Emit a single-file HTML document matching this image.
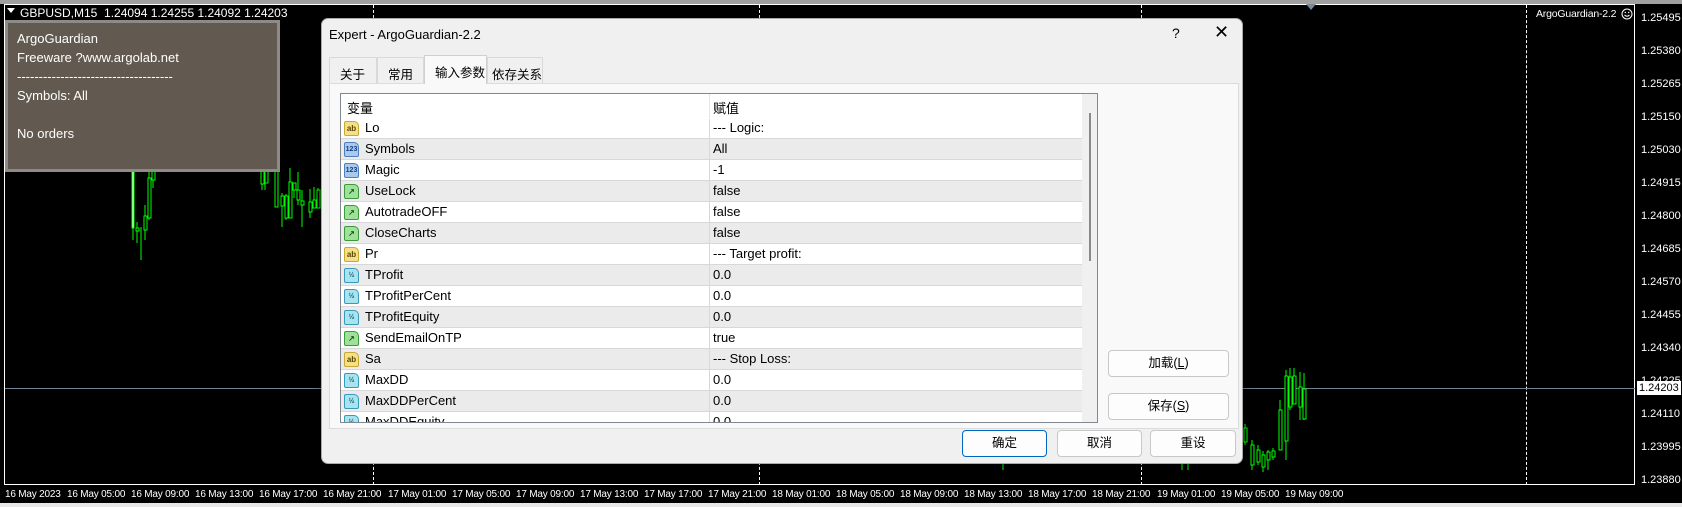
<!DOCTYPE html>
<html><head><meta charset="utf-8"><style>
*{margin:0;padding:0;box-sizing:border-box}
body{width:1682px;height:507px;background:#000;position:relative;overflow:hidden;font-family:"Liberation Sans","Noto Sans CJK SC",sans-serif}
.a{position:absolute}
.px{font-size:11px;color:#fff;left:1641px;font-family:"Liberation Sans",sans-serif}
.tl{font-size:10px;letter-spacing:-0.2px;color:#fff;top:489px;font-family:"Liberation Sans",sans-serif;white-space:nowrap}
.dlg{left:321px;top:18px;width:922px;height:446px;background:#f0f0f0;border:1px solid #aaa;border-radius:7px;box-shadow:0 0 8px rgba(0,0,0,.4)}
.tab{top:38px;height:26px;border:1px solid #d9d9d9;border-bottom:none;background:#f0f0f0;font-size:12.5px;padding:6px 0 0 10px;color:#000}
.row{position:absolute;left:0;width:741px;height:21px;border-bottom:1px solid #d8d8d8;font-size:13px;color:#000}
.row span.n{position:absolute;left:24px;top:2px}
.row span.v{position:absolute;left:372px;top:2px}
.ic{position:absolute;left:3px;top:3px;width:15px;height:15px;border:1px solid;border-radius:2px 5px 2px 2px;font-size:8px;font-weight:bold;text-align:center;line-height:13px;font-family:"Liberation Sans",sans-serif;font-style:normal}
.ab{background:#f5e08a;border-color:#c8a830;color:#5a4400}
.n3{background:#a9c9ee;border-color:#4c7fc0;color:#13407a;font-size:7px}
.bl{background:#9fe09a;border-color:#3a9a3a;color:#106010}
.hf{background:#a8e4f0;border-color:#3a98b8;color:#10607a;font-size:7px}
.btn{position:absolute;background:#fdfdfd;border:1px solid #c8c8c8;border-radius:4px;font-size:12.5px;text-align:center;line-height:25px;color:#000}
</style></head><body>
<div class="a" style="left:0;top:0;width:1682px;height:4px;background:#a0a0a0"></div>
<div class="a" style="left:0;top:503px;width:1682px;height:4px;background:#e8e8e8"></div>
<div class="a" style="left:4px;top:4px;width:1631px;height:481px;border:1px solid #fff"></div>
<div class="a" style="left:373px;top:5px;height:480px;border-left:1px dashed #fff"></div>
<div class="a" style="left:759px;top:5px;height:480px;border-left:1px dashed #fff"></div>
<div class="a" style="left:1141px;top:5px;height:480px;border-left:1px dashed #fff"></div>
<div class="a" style="left:1526px;top:5px;height:480px;border-left:1px dashed #fff"></div>
<div class="a" style="left:5px;top:388px;width:1630px;height:1px;background:#6f8296"></div>
<div class="a" style="left:1306px;top:4px;width:0;height:0;border-left:5px solid transparent;border-right:5px solid transparent;border-top:6px solid #7a8a9a"></div>
<svg class="a" style="left:0;top:0" width="1682" height="507">
<g stroke="#00ff00" stroke-width="1" fill="#000">
<line x1="133" y1="150" x2="133" y2="240"/><rect x="132" y="150" width="2" height="78" fill="#fff" stroke="#00ff00"/>
<line x1="137" y1="222" x2="137" y2="243"/><rect x="136" y="228" width="3" height="3"/>
<line x1="141" y1="227" x2="141" y2="260"/>
<line x1="145" y1="205" x2="145" y2="240"/><rect x="144" y="216" width="3" height="14"/>
<line x1="149" y1="170" x2="149" y2="220"/><rect x="148" y="178" width="3" height="40"/>
<line x1="153" y1="165" x2="153" y2="188"/><rect x="152" y="170" width="3" height="10"/>
<line x1="262" y1="170" x2="262" y2="190"/><rect x="261" y="170" width="3" height="14"/>
<line x1="265" y1="170" x2="265" y2="190"/><rect x="265" y="170" width="3" height="13"/>
<line x1="276" y1="170" x2="276" y2="207"/><rect x="275" y="170" width="3" height="37"/>
<line x1="282" y1="193" x2="282" y2="227"/><rect x="281" y="196" width="3" height="10"/>
<line x1="286" y1="194" x2="286" y2="220"/><rect x="285" y="196" width="3" height="22"/>
<line x1="290" y1="168" x2="290" y2="218"/><rect x="289" y="182" width="3" height="36"/>
<line x1="294" y1="184" x2="294" y2="198"/><rect x="293" y="183" width="3" height="7"/>
<line x1="298" y1="172" x2="298" y2="205"/><rect x="297" y="190" width="3" height="10"/>
<line x1="302" y1="190" x2="302" y2="227"/><rect x="301" y="201" width="3" height="4"/>
<line x1="310" y1="189" x2="310" y2="218"/><rect x="309" y="202" width="3" height="10"/>
<line x1="314" y1="187" x2="314" y2="207"/><rect x="313" y="200" width="3" height="8"/>
<line x1="318" y1="188" x2="318" y2="208"/><rect x="317" y="190" width="3" height="18"/>
<line x1="1245" y1="424" x2="1245" y2="445"/><rect x="1244" y="428" width="3" height="14"/>
<line x1="1252" y1="440" x2="1252" y2="470"/><rect x="1251" y="445" width="3" height="20"/>
<line x1="1258" y1="445" x2="1258" y2="465"/><rect x="1257" y="450" width="3" height="12"/>
<line x1="1263" y1="451" x2="1263" y2="472"/><rect x="1262" y="455" width="3" height="12"/>
<line x1="1268" y1="450" x2="1268" y2="470"/><rect x="1267" y="452" width="3" height="8"/>
<line x1="1273" y1="448" x2="1273" y2="460"/><rect x="1272" y="451" width="3" height="6"/>
<line x1="1280" y1="400" x2="1280" y2="450"/><rect x="1279" y="410" width="3" height="40"/>
<line x1="1286" y1="370" x2="1286" y2="460"/><rect x="1285" y="376" width="3" height="65"/>
<line x1="1290" y1="368" x2="1290" y2="410"/><rect x="1289" y="377" width="3" height="30"/>
<line x1="1294" y1="368" x2="1294" y2="404"/><rect x="1293" y="376" width="3" height="28"/>
<line x1="1300" y1="372" x2="1300" y2="420"/><rect x="1299" y="387" width="3" height="20"/>
<line x1="1304" y1="373" x2="1304" y2="420"/><rect x="1303" y="389" width="3" height="30"/>
<line x1="1003" y1="425" x2="1003" y2="470"/><line x1="1024" y1="430" x2="1024" y2="460"/>
<line x1="1182" y1="425" x2="1182" y2="470"/><line x1="1188" y1="435" x2="1188" y2="470"/>
</g>
<circle cx="1627" cy="14" r="5" fill="none" stroke="#fff" stroke-width="1"/>
<path d="M1624.5 15 Q1627 17.5 1629.5 15" fill="none" stroke="#fff"/>
<circle cx="1625.3" cy="12.5" r=".7" fill="#fff"/><circle cx="1628.7" cy="12.5" r=".7" fill="#fff"/>
</svg>
<div class="a" style="left:7px;top:8px;width:0;height:0;border-left:4px solid transparent;border-right:4px solid transparent;border-top:5px solid #fff"></div>
<div class="a" style="left:20px;top:6px;font-size:12px;color:#fff">GBPUSD,M15&nbsp; 1.24094 1.24255 1.24092 1.24203</div>
<div class="a" style="left:1536px;top:8px;font-size:10.5px;color:#fff;letter-spacing:-0.2px">ArgoGuardian-2.2</div>
<div class="a" style="left:5px;top:20px;width:275px;height:152px;background:#625a50;border:3px solid #8e8a87;color:#fff;font-size:13px;line-height:19px;padding:6px 0 0 9px">ArgoGuardian<br>Freeware ?www.argolab.net<br>------------------------------------<br>Symbols: All<br><br>No orders</div>
<div class="a px" style="top:12px">1.25495</div><div class="a px" style="top:45px">1.25380</div><div class="a px" style="top:78px">1.25265</div><div class="a px" style="top:111px">1.25150</div><div class="a px" style="top:144px">1.25030</div><div class="a px" style="top:177px">1.24915</div><div class="a px" style="top:210px">1.24800</div><div class="a px" style="top:243px">1.24685</div><div class="a px" style="top:276px">1.24570</div><div class="a px" style="top:309px">1.24455</div><div class="a px" style="top:342px">1.24340</div><div class="a px" style="top:375px">1.24225</div><div class="a px" style="top:408px">1.24110</div><div class="a px" style="top:441px">1.23995</div><div class="a px" style="top:474px">1.23880</div>
<div class="a" style="left:1637px;top:381px;width:44px;height:14px;background:#fff;color:#000;font-size:11px;padding-left:2px;line-height:14px">1.24203</div>
<div class="a tl" style="left:5px">16 May 2023</div>
<div class="a tl" style="left:67px">16 May 05:00</div><div class="a tl" style="left:131px">16 May 09:00</div><div class="a tl" style="left:195px">16 May 13:00</div><div class="a tl" style="left:259px">16 May 17:00</div><div class="a tl" style="left:323px">16 May 21:00</div><div class="a tl" style="left:388px">17 May 01:00</div><div class="a tl" style="left:452px">17 May 05:00</div><div class="a tl" style="left:516px">17 May 09:00</div><div class="a tl" style="left:580px">17 May 13:00</div><div class="a tl" style="left:644px">17 May 17:00</div><div class="a tl" style="left:708px">17 May 21:00</div><div class="a tl" style="left:772px">18 May 01:00</div><div class="a tl" style="left:836px">18 May 05:00</div><div class="a tl" style="left:900px">18 May 09:00</div><div class="a tl" style="left:964px">18 May 13:00</div><div class="a tl" style="left:1028px">18 May 17:00</div><div class="a tl" style="left:1092px">18 May 21:00</div><div class="a tl" style="left:1157px">19 May 01:00</div><div class="a tl" style="left:1221px">19 May 05:00</div><div class="a tl" style="left:1285px">19 May 09:00</div>
<div class="a dlg">
 <div class="a" style="left:7px;top:8px;font-size:13px;color:#000">Expert - ArgoGuardian-2.2</div>
 <div class="a" style="left:850px;top:6px;font-size:14px">?</div>
 <div class="a" style="left:892px;top:3px;font-size:18px">✕</div>
 <div class="a tab" style="left:7px;width:48px">关于</div>
 <div class="a tab" style="left:55px;width:47px">常用</div>
 <div class="a tab" style="left:102px;top:36px;height:29px;width:63px;background:#f9f9f9;z-index:2;border-color:#d0d0d0">输入参数</div>
 <div class="a tab" style="left:165px;width:56px;padding-left:4px">依存关系</div>
 <div class="a" style="left:7px;top:64px;width:910px;height:346px;background:#f9f9f9;border:1px solid #dcdcdc"></div>
 <div class="a" style="left:18px;top:74px;width:758px;height:330px;background:#fff;border:1px solid #828790;overflow:hidden">
  <div class="a" style="left:0;top:0;width:741px;height:25px;font-size:13px"><span class="a" style="left:6px;top:4px">变量</span><span class="a" style="left:368px;top:0;height:25px;border-left:1px solid #e5e5e5"></span><span class="a" style="left:372px;top:4px">赋值</span></div>
  <div class="a" style="left:368px;top:25px;width:1px;height:310px;background:#d8d8d8;z-index:3"></div>
  <div style="position:absolute;left:0;top:24px;width:741px">
   <div class="row" style="top:0;background:#fff"><i class="ic ab">ab</i><span class="n">Lo</span><span class="v">--- Logic:</span></div>
   <div class="row" style="top:21px;background:#ebebeb"><i class="ic n3">123</i><span class="n">Symbols</span><span class="v">All</span></div>
   <div class="row" style="top:42px;background:#fff"><i class="ic n3">123</i><span class="n">Magic</span><span class="v">-1</span></div>
   <div class="row" style="top:63px;background:#ebebeb"><i class="ic bl">↗</i><span class="n">UseLock</span><span class="v">false</span></div>
   <div class="row" style="top:84px;background:#fff"><i class="ic bl">↗</i><span class="n">AutotradeOFF</span><span class="v">false</span></div>
   <div class="row" style="top:105px;background:#ebebeb"><i class="ic bl">↗</i><span class="n">CloseCharts</span><span class="v">false</span></div>
   <div class="row" style="top:126px;background:#fff"><i class="ic ab">ab</i><span class="n">Pr</span><span class="v">--- Target profit:</span></div>
   <div class="row" style="top:147px;background:#ebebeb"><i class="ic hf">½</i><span class="n">TProfit</span><span class="v">0.0</span></div>
   <div class="row" style="top:168px;background:#fff"><i class="ic hf">½</i><span class="n">TProfitPerCent</span><span class="v">0.0</span></div>
   <div class="row" style="top:189px;background:#ebebeb"><i class="ic hf">½</i><span class="n">TProfitEquity</span><span class="v">0.0</span></div>
   <div class="row" style="top:210px;background:#fff"><i class="ic bl">↗</i><span class="n">SendEmailOnTP</span><span class="v">true</span></div>
   <div class="row" style="top:231px;background:#ebebeb"><i class="ic ab">ab</i><span class="n">Sa</span><span class="v">--- Stop Loss:</span></div>
   <div class="row" style="top:252px;background:#fff"><i class="ic hf">½</i><span class="n">MaxDD</span><span class="v">0.0</span></div>
   <div class="row" style="top:273px;background:#ebebeb"><i class="ic hf">½</i><span class="n">MaxDDPerCent</span><span class="v">0.0</span></div>
   <div class="row" style="top:294px;background:#fff"><i class="ic hf">½</i><span class="n">MaxDDEquity</span><span class="v">0.0</span></div>
  </div>
  <div class="a" style="left:741px;top:0;width:16px;height:330px;background:#f0f0f0;z-index:4"><div class="a" style="left:7px;top:19px;width:2px;height:148px;background:#8a8a8a"></div></div>
 </div>
 <div class="btn" style="left:786px;top:331px;width:121px;height:27px">加载(<u>L</u>)</div>
 <div class="btn" style="left:786px;top:374px;width:121px;height:27px">保存(<u>S</u>)</div>
 <div class="btn" style="left:640px;top:411px;width:85px;height:27px;border:1px solid #0067c0">确定</div>
 <div class="btn" style="left:735px;top:411px;width:85px;height:27px">取消</div>
 <div class="btn" style="left:828px;top:411px;width:86px;height:27px">重设</div>
</div>
</body></html>
